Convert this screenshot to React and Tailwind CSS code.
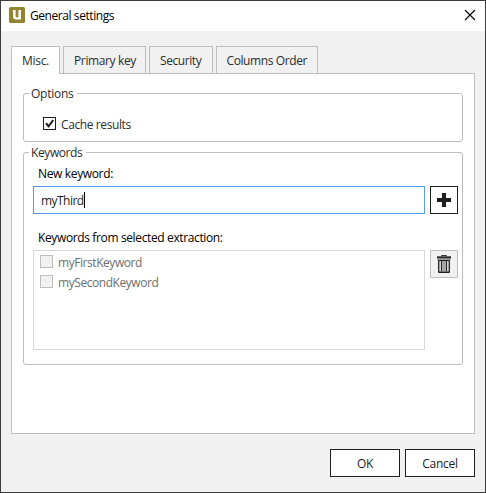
const label = 'block whitespace-nowrap leading-4';

function Tab({ active, className, textClass, children }) {
  return (
    <div
      className={`flex border border-b-0 border-[#bebebe] pt-[6px] text-[#2d2d2d] ${
        active ? 'h-[28px] bg-white' : 'h-[27px] bg-[#f1f1f1]'
      } ${className}`}
    >
      <span className={`${label} ${textClass}`}>{children}</span>
    </div>
  );
}

function Group({ title, legendClass, className, children }) {
  return (
    <section className={`relative rounded-[3px] border border-[#bebebe] ${className}`}>
      <h2 className={`absolute -top-[8px] left-[5px] h-4 bg-white pl-[2px] text-[#2d2d2d] ${label} ${legendClass}`}>
        {title}
      </h2>
      {children}
    </section>
  );
}

function KeywordItem({ children }) {
  return (
    <li className="flex h-5 items-start text-[#6e6e6e]">
      <span className="size-[13px] border border-[#bebebe] bg-[#f1f1f1]" />
      <span className={`ml-[5px] ${label} tracking-[-0.44px]`}>{children}</span>
    </li>
  );
}

export default function App() {
  return (
    <main className="flex h-[493px] w-[486px] flex-col border border-[#3c3c3c] bg-[#f1f1f1] font-['Open_Sans','Noto_Sans',sans-serif] text-[12px] text-black">
      <header className="flex h-[30px] shrink-0 items-start bg-white pl-2">
        <svg className="mt-[6px] size-4" viewBox="0 0 16 16">
          <rect width="16" height="16" rx="1.5" fill="#93852f" />
          <path d="M4 3h2.6v6q0 1.2 1.2 1.2h1.6V3H12v9.6H7Q4 12.6 4 9.6z" fill="#fff" />
        </svg>
        <h1 className={`ml-[5px] mt-[7px] ${label} tracking-[-0.43px]`}>General settings</h1>
        <svg className="ml-auto mr-[9px] mt-[8px] size-[12px]" viewBox="0 0 12 12">
          <path d="M1 1l10 10M11 1L1 11" stroke="#000" strokeWidth="1.1" />
        </svg>
      </header>

      <nav className="z-10 -mb-px ml-[10px] mt-[15px] flex h-[28px] shrink-0 items-start gap-[3px]">
        <Tab active className="w-[49px] pl-[10px]" textClass="tracking-[-0.3px]">Misc.</Tab>
        <Tab className="w-[83px] pl-[10px]" textClass="tracking-[-0.37px]">Primary key</Tab>
        <Tab className="w-[64px] pl-[10px]" textClass="tracking-[-0.42px]">Security</Tab>
        <Tab className="w-[102px] pl-[9.5px]" textClass="tracking-[-0.4px]">Columns Order</Tab>
      </nav>

      <div className="ml-[10px] h-[361px] w-[464px] shrink-0 border border-[#bebebe] bg-white pl-[11px] pt-[19px]">
        <Group title="Options" className="h-[49px] w-[440px]" legendClass="w-[48px] tracking-[-0.25px]">
          <div className="flex pl-[19px] pt-[23px]">
            <span className="size-[13px] border border-[#1e1e1e] bg-white">
              <svg className="size-[11px]" viewBox="0 0 11 11">
                <path d="M2 5.2l2.6 3.2L9.2 2" fill="none" stroke="#1e1e1e" strokeWidth="2" />
              </svg>
            </span>
            <span className={`ml-[5px] ${label} text-[#2d2d2d] tracking-[-0.4px]`}>Cache results</span>
          </div>
        </Group>

        <Group title="Keywords" className="mt-[10px] h-[213px] w-[440px] pl-[9px] pt-[13px]" legendClass="w-[57px] tracking-[-0.4px]">
          <span className={`ml-[5px] ${label} tracking-[-0.35px]`}>New keyword:</span>
          <div className="mt-[4px] flex gap-[5px]">
            <div className="flex h-[28px] w-[392px] items-center border border-[#569de5] pl-[7px] text-[#1e1e1e]">
              <span className={`${label} pt-[2px] tracking-[-0.54px]`}>myThird</span>
              <span className="h-4 w-px bg-black" />
            </div>
            <button className="flex size-[28px] items-center justify-center border border-[#1e1e1e] bg-white">
              <svg className="size-[14px]" viewBox="0 0 14 14">
                <path d="M7 0v14M0 7h14" stroke="#1e1e1e" strokeWidth="4.2" />
              </svg>
            </button>
          </div>
          <span className={`ml-[5px] mt-[16px] ${label} tracking-[-0.37px]`}>Keywords from selected extraction:</span>
          <div className="mt-[4px] flex gap-[5px]">
            <ul className="h-[100px] w-[392px] border border-[#d9d9d9] pl-[6px] pt-[4px]">
              <KeywordItem>myFirstKeyword</KeywordItem>
              <KeywordItem>mySecondKeyword</KeywordItem>
            </ul>
            <button className="flex size-[28px] justify-center border border-[#bebebe] bg-[#f1f1f1] pt-[4px]">
              <svg className="h-[18px] w-[14px]" viewBox="0 0 14 18">
                <path d="M4.5 1.2V.5h5v.7" fill="none" stroke="#333" />
                <path d="M0 1.3h14v2.3H0z" fill="#2a2a2a" />
                <path d="M0 3.6h14V5H0z" fill="#999" />
                <path d="M1 5h12v1H1zM1.5 16.5h11V18h-11z" fill="#1e1e1e" />
                <path d="M1.7 5v12.5M12.3 5v12.5" stroke="#2a2a2a" strokeWidth="1.4" />
                <path d="M4.6 6v10.5M9.4 6v10.5" stroke="#2a2a2a" strokeWidth="1.5" />
                <path d="M7 6v10.5" stroke="#777" strokeWidth="1.3" />
              </svg>
            </button>
          </div>
        </Group>
      </div>

      <footer className="mr-[10px] mt-[15px] flex justify-end gap-[5px] text-[#1e1e1e]">
        <button className={`h-[28px] w-[70px] border border-[#1e1e1e] bg-white pt-[2px] ${label} tracking-[-0.25px]`}>OK</button>
        <button className={`h-[28px] w-[70px] border border-[#1e1e1e] bg-white pt-[2px] ${label} tracking-[-0.3px]`}>Cancel</button>
      </footer>
    </main>
  );
}
